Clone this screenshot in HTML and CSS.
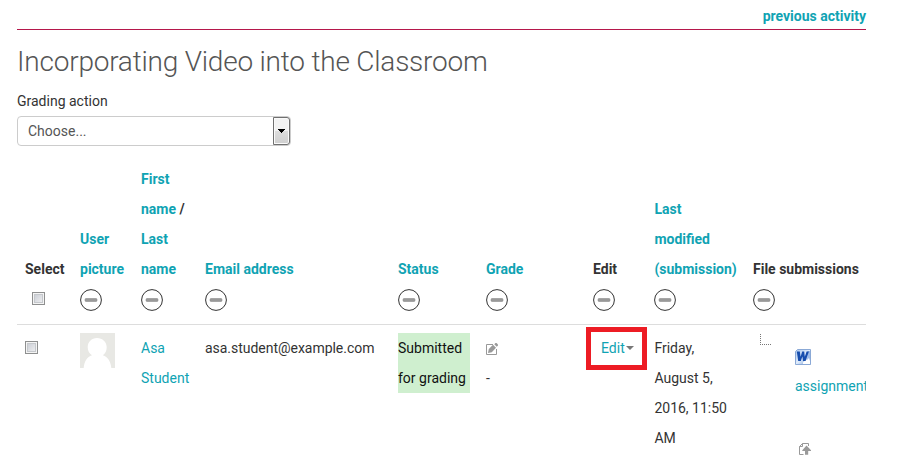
FILE: index.html
```html
<!DOCTYPE html>
<html lang="en">
<head>
<meta charset="utf-8">
<title>Incorporating Video into the Classroom</title>
<link rel="stylesheet" href="styles.css">
</head>
<body>
<svg class="defs" width="0" height="0" aria-hidden="true">
  <symbol id="minus" viewBox="0 0 22 22">
    <circle cx="11" cy="11" r="10.4" fill="#fff" stroke="#333" stroke-width="1"/>
    <rect x="5" y="9.500" width="12" height="3" rx="1" fill="#999" stroke="#808080" stroke-width=".5"/>
  </symbol>
</svg>
<main class="page">
  <nav class="activity-nav"><a href="#">previous activity</a></nav>
  <h1>Incorporating Video into the Classroom</h1>
  <div class="action-label">Grading action</div>
  <div class="select"><span>Choose...</span><i class="select-button"><svg width="7" height="4" viewBox="0 0 7 4"><path d="M0 0h7v1H6v1H5v1H4v1H3V3H2V2H1V1H0z" fill="#000"/></svg></i></div>
  <table class="grading">
    <colgroup><col class="c-select"><col class="c-picture"><col class="c-name"><col class="c-email"><col class="c-status"><col class="c-grade"><col class="c-edit"><col class="c-modified"><col class="c-files"></colgroup>
    <thead>
      <tr>
        <th>Select<div class="toggle toggle-check"><i class="checkbox"></i></div></th>
        <th><a href="#">User<br>picture</a><div class="toggle"><svg><use href="#minus"/></svg></div></th>
        <th><a href="#">First<br>name</a> /<br><a href="#">Last<br>name</a><div class="toggle"><svg><use href="#minus"/></svg></div></th>
        <th><a href="#">Email address</a><div class="toggle"><svg><use href="#minus"/></svg></div></th>
        <th><a href="#">Status</a><div class="toggle"><svg><use href="#minus"/></svg></div></th>
        <th><a href="#">Grade</a><div class="toggle"><svg><use href="#minus"/></svg></div></th>
        <th>Edit<div class="toggle"><svg><use href="#minus"/></svg></div></th>
        <th class="modified"><a href="#">Last<br>modified<br>(submission)</a><div class="toggle"><svg><use href="#minus"/></svg></div></th>
        <th>File submissions<div class="toggle"><svg><use href="#minus"/></svg></div></th>
      </tr>
    </thead>
    <tbody>
      <tr>
        <td><i class="checkbox row-check"></i></td>
        <td><svg class="avatar" viewBox="0 0 35 35"><rect width="35" height="35" fill="#e8e8e4"/><path d="M17 5c-5.500 0-9.300 4-9.300 9.300 0 3.500 1.600 6.200 4.300 8C7 24 4.300 28.500 3.700 35h27.600c-.6-6.500-3.500-11-8.400-12.700 2.400-1.800 3.800-4.500 3.800-8C26.700 9 22.500 5 17 5z" fill="#fff"/></svg></td>
        <td><a href="#">Asa<br>Student</a></td>
        <td class="email">asa.student@example.com</td>
        <td><div class="status">Submitted<br>for grading</div></td>
        <td><svg class="grade-icon" width="12" height="12" viewBox="0 0 12 12"><path d="M7 1.500H.5v10h10V6" fill="none" stroke="#999"/><path d="M2 10l.8-4L7 1.800 10 4.800 5.800 9.200z" fill="#999"/><path d="M8.300 1.300L9.500 0h1L12 1.500v1l-1.300 1.300z" fill="#999"/></svg><br>-</td>
        <td><div class="edit-cell"><a href="#">Edit</a><i class="caret"></i><i class="highlight"></i></div></td>
        <td class="modified">Friday,<br>August 5,<br>2016, 11:50<br>AM</td>
        <td>
          <div class="files">
            <i class="tree-line"></i>
            <div class="file">
              <svg class="word-icon" width="16" height="16" viewBox="0 0 16 16"><defs><linearGradient id="wordBg" x2="1" y2="1"><stop stop-color="#a9c6ee"/><stop offset=".5" stop-color="#e0ecfb"/><stop offset="1" stop-color="#6f98d6"/></linearGradient></defs><path d="M2.500.5h13v15H.5v-13z" fill="url(#wordBg)" stroke="#8ba9d6"/><path d="M12.500 2H15v9h-2.500z" fill="#9dbbe8"/><path d="M8 13.500l3-3 1 .5 2-2 1 3v3H8z" fill="#fff"/><path d="M1.800 2.500h3l.8 5.300L7.200 2.500h2l.6 5.300 1.800-5.300h2.300L10.600 12H8l-.6-4.500L5.800 12H3.200z" fill="#174eae"/></svg>
              <a href="#">assignment</a>
              <svg class="upload-icon" width="12" height="12" viewBox="0 0 12 12"><path d="M4.500 11.500h-4V3.500l3-3h6V3M3.500.5v3h-3" fill="none" stroke="#999"/><path d="M7.500 2.500L12 7.200V8H9.200v3.700H6V8H3.300v-.8z" fill="#999"/></svg>
            </div>
          </div>
        </td>
      </tr>
    </tbody>
  </table>
</main>
</body>
</html>
```
FILE: styles.css
```css
* { box-sizing: border-box; }
body {
  margin: 0;
  height: 472px;
  overflow: hidden;
  background: #fff;
  color: #333;
  font: 14px/30px Roboto, "Liberation Sans", sans-serif;
}
a { color: #0fa3b3; text-decoration: none; }
svg { display: block; }
.defs { display: none; }
.page { width: 849px; margin-left: 17px; }
.activity-nav {
  height: 30px;
  padding-top: 1px;
  border-bottom: 1px solid #b5174b;
  text-align: right;
  font-weight: 700;
}
h1 {
  margin: 12px 0 0;
  height: 40px;
  color: #555;
  font-size: 28px;
  line-height: 40px;
  font-weight: 300;
  letter-spacing: -.21px;
}
.action-label { margin-top: 4px; }
.select {
  display: flex;
  justify-content: space-between;
  width: 274px;
  height: 30px;
  padding-left: 10px;
  border: 1px solid #ccc;
  border-radius: 4px;
  color: #555;
  line-height: 28px;
}
.select-button {
  display: flex;
  align-items: center;
  justify-content: center;
  width: 17px;
  height: 28px;
  border: 1px solid #707070;
  border-radius: 0 3px 3px 0;
  background: linear-gradient(#f3f3f3 0 48%, #ddd 50%, #cfcfcf);
  box-shadow: inset 0 0 0 1px #fafafa;
}
.grading {
  width: 849px;
  margin-top: 18px;
  border-collapse: separate;
  border-spacing: 0;
  table-layout: fixed;
}
.c-select { width: 55px; }
.c-picture { width: 61px; }
.c-name { width: 64px; }
.c-email { width: 193px; }
.c-status { width: 88px; }
.c-grade { width: 107px; }
.c-edit { width: 62px; }
.c-modified { width: 98px; }
.c-files { width: 121px; }
th, td { padding: 0 0 0 8px; text-align: left; white-space: nowrap; }
th { vertical-align: bottom; border-bottom: 1px solid #ddd; }
td { padding-top: 8px; vertical-align: top; }
.modified { padding-left: 7.400px; }
.email { letter-spacing: -.03px; }
.toggle { height: 40px; padding-top: 5px; }
.toggle svg { width: 22px; height: 22px; }
.toggle-check { padding: 8px 0 0 7px; }
.checkbox {
  display: block;
  width: 13px;
  height: 13px;
  border: 1px solid #8e8f8f;
  background: linear-gradient(135deg, #c4c8d0, #f4f4f5);
  box-shadow: inset 0 0 0 1px #f4f4f4, inset 0 0 0 2px #c5c8cc;
}
.row-check { margin-top: 8px; }
.avatar { width: 35px; height: 35px; }
.status { width: 72px; background: #cfefcf; color: #111; }
.grade-icon { display: inline-block; vertical-align: -2px; }
.edit-cell { position: relative; display: flex; align-items: center; height: 30px; padding-left: 8px; }
.caret { margin-left: 1px; border: 4px solid transparent; border-top-color: #777; border-bottom: 0; }
.highlight { position: absolute; left: -7px; top: -6px; width: 61px; height: 43px; border: 5px solid #ed1c24; }
.files { display: flex; overflow: hidden; }
.tree-line { width: 11px; height: 11px; margin: 1px 24px 0 7px; flex: none; border: dotted #777; border-width: 0 0 1px 1px; }
.file { width: 71px; flex: none; overflow: hidden; }
.word-icon { margin: 16px 0 6px; }
.upload-icon { margin: 42px 0 0 4px; }
```
